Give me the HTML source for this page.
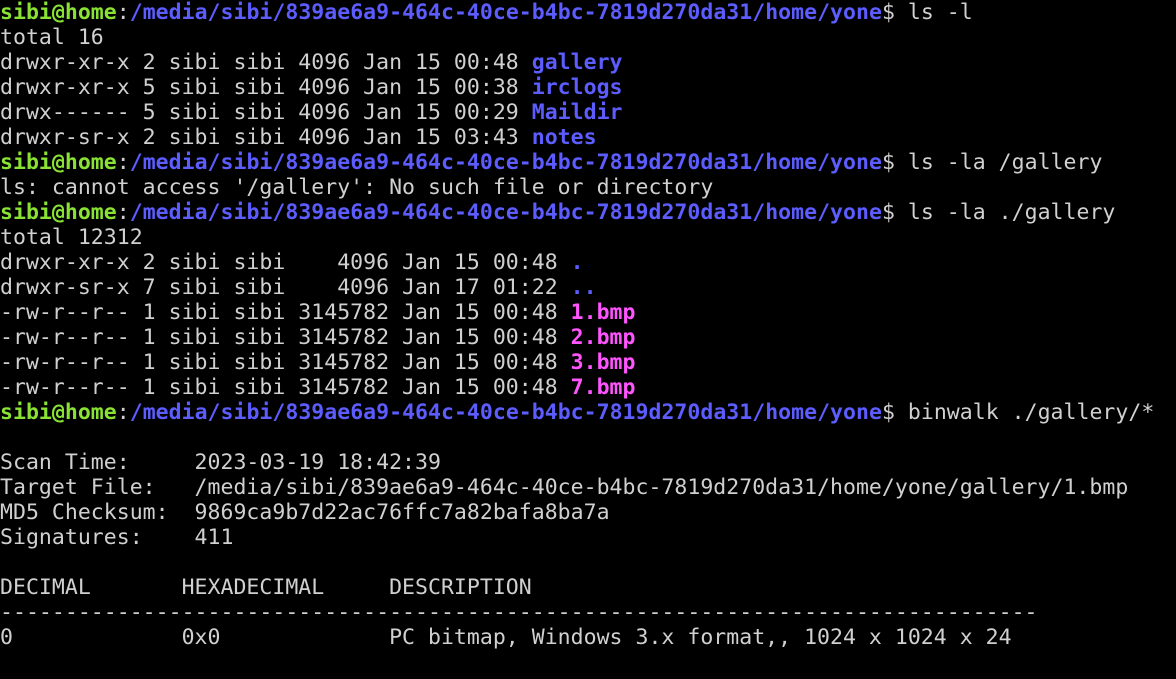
<!DOCTYPE html>
<html><head><meta charset="utf-8"><style>
html,body{margin:0;padding:0;background:#000;width:1176px;height:679px;overflow:hidden}
pre{margin:0;padding:0;font-family:"DejaVu Sans Mono","Liberation Mono",monospace;font-size:21.5px;letter-spacing:0.025px;line-height:25px;color:#d0d0d0;white-space:pre}
.g{color:#8ae234;font-weight:bold}.b{color:#5c5cff;font-weight:bold}.m{color:#ff55ff;font-weight:bold}
</style></head><body><pre><span class="g">sibi@home</span>:<span class="b">/media/sibi/839ae6a9-464c-40ce-b4bc-7819d270da31/home/yone</span>$ ls -l
total 16
drwxr-xr-x 2 sibi sibi 4096 Jan 15 00:48 <span class="b">gallery</span>
drwxr-xr-x 5 sibi sibi 4096 Jan 15 00:38 <span class="b">irclogs</span>
drwx------ 5 sibi sibi 4096 Jan 15 00:29 <span class="b">Maildir</span>
drwxr-sr-x 2 sibi sibi 4096 Jan 15 03:43 <span class="b">notes</span>
<span class="g">sibi@home</span>:<span class="b">/media/sibi/839ae6a9-464c-40ce-b4bc-7819d270da31/home/yone</span>$ ls -la /gallery
ls: cannot access '/gallery': No such file or directory
<span class="g">sibi@home</span>:<span class="b">/media/sibi/839ae6a9-464c-40ce-b4bc-7819d270da31/home/yone</span>$ ls -la ./gallery
total 12312
drwxr-xr-x 2 sibi sibi    4096 Jan 15 00:48 <span class="b">.</span>
drwxr-sr-x 7 sibi sibi    4096 Jan 17 01:22 <span class="b">..</span>
-rw-r--r-- 1 sibi sibi 3145782 Jan 15 00:48 <span class="m">1.bmp</span>
-rw-r--r-- 1 sibi sibi 3145782 Jan 15 00:48 <span class="m">2.bmp</span>
-rw-r--r-- 1 sibi sibi 3145782 Jan 15 00:48 <span class="m">3.bmp</span>
-rw-r--r-- 1 sibi sibi 3145782 Jan 15 00:48 <span class="m">7.bmp</span>
<span class="g">sibi@home</span>:<span class="b">/media/sibi/839ae6a9-464c-40ce-b4bc-7819d270da31/home/yone</span>$ binwalk ./gallery/*

Scan Time:     2023-03-19 18:42:39
Target File:   /media/sibi/839ae6a9-464c-40ce-b4bc-7819d270da31/home/yone/gallery/1.bmp
MD5 Checksum:  9869ca9b7d22ac76ffc7a82bafa8ba7a
Signatures:    411

DECIMAL       HEXADECIMAL     DESCRIPTION
--------------------------------------------------------------------------------
0             0x0             PC bitmap, Windows 3.x format,, 1024 x 1024 x 24
</pre></body></html>
